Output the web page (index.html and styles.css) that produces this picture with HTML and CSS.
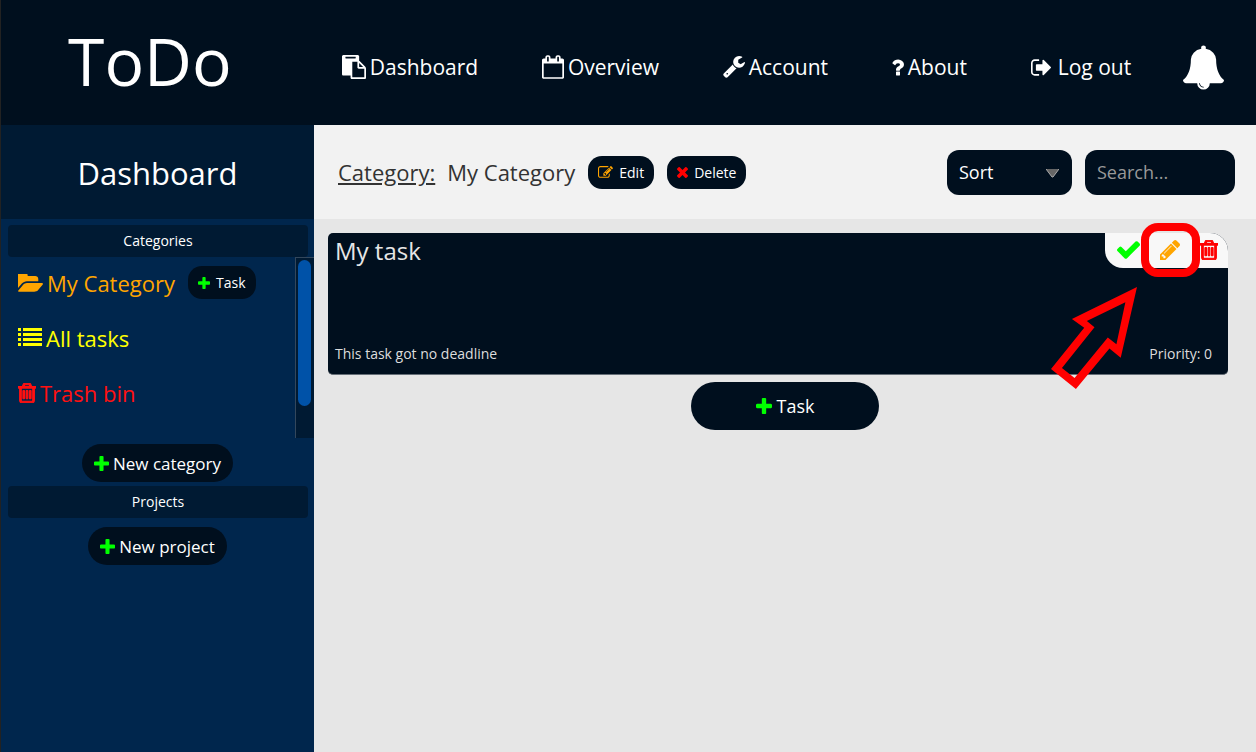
FILE: index.html
```html
<!DOCTYPE html>
<html lang="en">
<head>
<meta charset="utf-8">
<meta name="viewport" content="width=device-width, initial-scale=1">
<title>ToDo - Dashboard</title>
<link rel="stylesheet" href="styles.css">
</head>
<body>
<svg class="sprite" aria-hidden="true">
  <symbol id="plus" viewBox="192 128 1408 1408"><path d="M1600 736v192q0 40-28 68t-68 28h-416v416q0 40-28 68t-68 28h-192q-40 0-68-28t-28-68v-416h-416q-40 0-68-28t-28-68v-192q0-40 28-68t68-28h416v-416q0-40 28-68t68-28h192q40 0 68 28t28 68v416h416q40 0 68 28t28 68z"/></symbol>
  <symbol id="trash" viewBox="192 128 1408 1536"><path d="M704 736v576q0 14-9 23t-23 9h-64q-14 0-23-9t-9-23v-576q0-14 9-23t23-9h64q14 0 23 9t9 23zm256 0v576q0 14-9 23t-23 9h-64q-14 0-23-9t-9-23v-576q0-14 9-23t23-9h64q14 0 23 9t9 23zm256 0v576q0 14-9 23t-23 9h-64q-14 0-23-9t-9-23v-576q0-14 9-23t23-9h64q14 0 23 9t9 23zm128 724v-948h-896v948q0 22 7 40.500t14.500 27 10.500 8.500h832q3 0 10.500-8.500t14.500-27 7-40.500zm-672-1076h448l-48-117q-7-9-17-11h-317q-10 2-17 11zm928 32v64q0 14-9 23t-23 9h-96v948q0 83-47 143.500t-113 60.500h-832q-66 0-113-58.500t-47-141.500v-952h-96q-14 0-23-9t-9-23v-64q0-14 9-23t23-9h309l70-167q15-37 54-63t79-26h320q40 0 79 26t54 63l70 167h309q14 0 23 9t9 23z" stroke="currentColor" stroke-width="85"/></symbol>
</svg>

<header class="header">
  <h1 class="logo">ToDo</h1>
  <nav class="nav">
    <a class="nav-link" href="#dashboard"><svg class="icon i24" viewBox="0 0 1792 1792"><path d="M768 1664h896v-640h-416q-40 0-68-28t-28-68v-416h-384v1152zm256-1440v-64q0-13-9.500-22.500t-22.500-9.500h-704q-13 0-22.500 9.500t-9.500 22.500v64q0 13 9.500 22.500t22.500 9.500h704q13 0 22.500-9.500t9.500-22.500zm256 672h299l-299-299v299zm512 128v672q0 40-28 68t-68 28h-960q-40 0-68-28t-28-68v-160h-544q-40 0-68-28t-28-68v-1344q0-40 28-68t68-28h1088q40 0 68 28t28 68v328q21 13 36 28l408 408q28 28 48 76t20 88z"/></svg>Dashboard</a>
    <a class="nav-link" href="#overview"><svg class="icon calendar" viewBox="64 0 1664 1792"><path d="M192 1664h1408v-1024h-1408v1024zm384-1216v-288q0-14-9-23t-23-9h-64q-14 0-23 9t-9 23v288q0 14 9 23t23 9h64q14 0 23-9t9-23zm768 0v-288q0-14-9-23t-23-9h-64q-14 0-23 9t-9 23v288q0 14 9 23t23 9h64q14 0 23-9t9-23zm384-64v1280q0 52-38 90t-90 38h-1408q-52 0-90-38t-38-90v-1280q0-52 38-90t90-38h128v-96q0-66 47-113t113-47h64q66 0 113 47t47 113v96h384v-96q0-66 47-113t113-47h64q66 0 113 47t47 113v96h128q52 0 90 38t38 90z"/></svg>Overview</a>
    <a class="nav-link" href="#account"><svg class="icon i22" viewBox="64 128 1664 1664"><path d="M448 1472q0-26-19-45t-45-19-45 19-19 45 19 45 45 19 45-19 19-45zm644-420l-682 682q-37 37-90 37-52 0-91-37l-106-108q-38-36-38-90 0-53 38-91l681-681q39 98 114.500 173.500t173.500 114.500zm634-435q0 39-23 106-47 134-164.500 217.500t-258.500 83.500q-185 0-316.500-131.500t-131.500-316.500 131.500-316.500 316.500-131.500q58 0 121.500 16.500t107.500 46.500q16 11 16 28t-16 28l-293 169v224l193 107q5-3 79-48.500t135.500-81 70.500-35.500q15 0 23.500 10t8.500 25z"/></svg>Account</a>
    <a class="nav-link" href="#about"><svg class="icon question" viewBox="448 256 960 1280"><path d="M1088 1256v240q0 16-12 28t-28 12h-240q-16 0-28-12t-12-28v-240q0-16 12-28t28-12h240q16 0 28 12t12 28zm316-600q0 54-15.500 101t-35 76.500-55 59.500-57.500 43.500-61 35.500q-41 23-68.500 65t-27.500 67q0 17-12 32.500t-28 15.500h-240q-15 0-25.500-18.500t-10.500-37.500v-45q0-83 65-156.500t143-108.500q59-27 84-56t25-76q0-42-46.500-74t-107.500-32q-65 0-108 29-35 25-107 115-13 16-31 16-12 0-25-8l-164-125q-13-10-15.500-25t5.500-28q160-266 464-266 80 0 161 31t146 83 106 127.500 41 158.500z"/></svg>About</a>
    <a class="nav-link wide" href="#logout"><svg class="icon logout" viewBox="64 256 1568 1280"><path d="M704 1440q0 4 1 20t.5 26.500-3 23.500-10 19.500-20.500 6.500h-320q-119 0-203.500-84.500t-84.500-203.500v-704q0-119 84.500-203.500t203.500-84.500h320q13 0 22.500 9.500t9.500 22.500q0 4 1 20t.5 26.500-3 23.500-10 19.500-20.500 6.500h-320q-66 0-113 47t-47 113v704q0 66 47 113t113 47h312l11.500 1 11.500 3 8 5.500 7 9 2 13.500zm928-544q0 26-19 45l-544 544q-19 19-45 19t-45-19-19-45v-288h-448q-26 0-45-19t-19-45v-384q0-26 19-45t45-19h448v-288q0-26 19-45t45-19 45 19l544 544q19 19 19 45z"/></svg>Log out</a>
    <button class="bell" type="button" aria-label="Notifications"><svg class="icon" viewBox="64 0 1664 1792"><path d="M912 1696q0-16-16-16-59 0-101.500-42.500t-42.500-101.500q0-16-16-16t-16 16q0 73 51.500 124.500t124.500 51.500q16 0 16-16zm816-288q0 52-38 90t-90 38h-448q0 106-75 181t-181 75-181-75-75-181h-448q-52 0-90-38t-38-90q50-42 91-88t85-119.500 74.500-158.500 50-206 19.500-260q0-152 117-282.500t307-158.500q-8-19-8-39 0-40 28-68t68-28 68 28 28 68q0 20-8 39 190 28 307 158.500t117 282.500q0 139 19.500 260t50 206 74.500 158.500 85 119.500 91 88z"/></svg></button>
  </nav>
</header>

<div class="layout">
  <aside class="sidebar">
    <h2 class="sidebar-title">Dashboard</h2>
    <h3 class="section-title">Categories</h3>
    <div class="category-scroll">
      <ul class="category-list">
        <li class="category"><a class="category-link orange" href="#my-category"><svg class="icon folder" viewBox="0 256 1815 1280"><path d="M1815 952q0 31-31 66l-336 396q-43 51-120.500 86.500t-143.500 35.500h-1088q-34 0-60.500-13t-26.500-43q0-31 31-66l336-396q43-51 120.500-86.500t143.500-35.500h1088q34 0 60.500 13t26.500 43zm-343-344v160h-832q-94 0-197 47.500t-164 119.500l-337 396-5 6q0-4-.5-12.500t-.5-12.500v-960q0-92 66-158t158-66h320q92 0 158 66t66 158v32h544q92 0 158 66t66 158z"/></svg>My Category</a><button class="pill small" type="button"><svg class="icon i12 green"><use href="#plus"/></svg>Task</button></li>
        <li class="category"><a class="category-link yellow" href="#all"><svg class="icon list" viewBox="0 0 24 19"><path d="M0 0h3v3H0zM5 0h19v3H5zM0 5h3v3H0zM5 5h19v3H5zM0 10h3v3H0zM5 10h19v3H5zM0 15h3v3H0zM5 15h19v3H5z"/></svg>All tasks</a></li>
        <li class="category"><a class="category-link red" href="#trash"><svg class="icon bin"><use href="#trash"/></svg>Trash bin</a></li>
      </ul>
      <div class="track"><div class="thumb"></div></div>
    </div>
    <button class="pill medium" type="button"><svg class="icon i15 green"><use href="#plus"/></svg>New category</button>
    <h3 class="section-title">Projects</h3>
    <button class="pill medium project" type="button"><svg class="icon i15 green"><use href="#plus"/></svg>New project</button>
  </aside>

  <main class="main">
    <div class="toolbar">
      <h2 class="heading"><span class="heading-label">Category:</span><span>My Category</span></h2>
      <button class="pill small" type="button"><svg class="icon edit" viewBox="0 128 1792 1536"><path d="M888 1184l116-116-152-152-116 116v56h96v96h56zm440-720q-16-16-33 1l-350 350q-17 17-1 33t33-1l350-350q17-17 1-33zm80 594v190q0 119-84.500 203.500t-203.500 84.500h-832q-119 0-203.500-84.500t-84.500-203.500v-832q0-119 84.500-203.500t203.500-84.500h832q63 0 117 25 15 7 18 23 3 17-9 29l-49 49q-14 14-32 8-23-6-45-6h-832q-66 0-113 47t-47 113v832q0 66 47 113t113 47h832q66 0 113-47t47-113v-126q0-13 9-22l64-64q15-15 35-7t20 29zm-96-738l288 288-672 672h-288v-288zm444 132l-92 92-288-288 92-92q28-28 68-28t68 28l152 152q28 28 28 68t-28 68z"/></svg>Edit</button>
      <button class="pill small" type="button"><svg class="icon times" viewBox="302 366 1188 1188"><path d="M1490 1322q0 40-28 68l-136 136q-28 28-68 28t-68-28l-294-294-294 294q-28 28-68 28t-68-28l-136-136q-28-28-28-68t28-68l294-294-294-294q-28-28-28-68t28-68l136-136q28-28 68-28t68 28l294 294 294-294q28-28 68-28t68 28l136 136q28 28 28 68t-28 68l-294 294 294 294q28 28 28 68z"/></svg>Delete</button>
      <div class="filters">
        <div class="sort">
          <select class="field" aria-label="Sort"><option>Sort</option></select>
          <svg class="sort-arrow" viewBox="0 0 13 9"><path d="M0 0h13L7 8H6z" fill="#666"/><path d="M0 0l6 8h1l6-8" fill="none" stroke="#aaa"/></svg>
        </div>
        <input class="field search" type="search" placeholder="Search..." aria-label="Search">
      </div>
    </div>

    <section class="tasks">
      <article class="task">
        <h3 class="task-title">My task</h3>
        <div class="task-meta"><span>This task got no deadline</span><span>Priority: 0</span></div>
        <div class="task-actions">
          <button class="action green" type="button" aria-label="Complete"><svg class="icon check" viewBox="121 334 1550 1188"><path d="M1671 566q0 40-28 68l-724 724-136 136q-28 28-68 28t-68-28l-136-136-362-362q-28-28-28-68t28-68l136-136q28-28 68-28t68 28l294 295 656-657q28-28 68-28t68 28l136 136q28 28 28 68z"/></svg></button>
          <button class="action orange marked" type="button" aria-label="Edit"><svg class="icon i20" viewBox="128 149 1515 1515"><path d="M491 1536l91-91-235-235-91 91v107h128v128h107zm523-928q0-22-22-22-10 0-17 7l-542 542q-7 7-7 17 0 22 22 22 10 0 17-7l542-542q7-7 7-17zm-54-192l416 416-832 832h-416v-416zm683 96q0 53-37 90l-166 166-416-416 166-165q36-38 90-38 53 0 91 38l235 234q37 39 37 91z"/></svg></button>
          <button class="action red" type="button" aria-label="Delete"><svg class="icon bin"><use href="#trash"/></svg></button>
        </div>
        <svg class="pointer" viewBox="62 216 259 307" aria-hidden="true"><path fill-rule="evenodd" d="M321 216L125 312l37 27L62 463l75 60 101-122 34 28zM286 262l-27 126-26-20-100 122-38-30 98-123-23-19z"/></svg>
      </article>
      <button class="pill large" type="button"><svg class="icon i16 green"><use href="#plus"/></svg>Task</button>
    </section>
  </main>
</div>
</body>
</html>
```
FILE: styles.css
```css
* { box-sizing: border-box; }

body {
  margin: 0;
  min-height: 100vh;
  display: flex;
  flex-direction: column;
  background: #e6e6e6;
  color: #fff;
  font-family: "Open Sans", "Noto Sans", sans-serif;
}

h1, h2, h3, ul { margin: 0; padding: 0; font-weight: 400; }
ul { list-style: none; }
a { color: inherit; text-decoration: none; }
button, select, input { font: inherit; color: inherit; border: 0; }
button { cursor: pointer; }

.sprite { position: absolute; width: 0; height: 0; }
.icon { display: block; flex: none; fill: currentColor; }
.i12 { width: 12px; height: 12px; }
.i15 { width: 15px; height: 15px; }
.i16 { width: 16px; height: 16px; }
.i20 { width: 20px; height: 20px; }
.i22 { width: 22px; height: 22px; }
.i24 { width: 24px; height: 24px; }
.calendar { width: 22px; height: 24px; }
.question { width: 12px; height: 17px; }
.logout { width: 20px; height: 17px; }
.folder { width: 25px; height: 18px; }
.list { width: 24px; height: 19px; }
.bin { width: 18px; height: 20px; }
.edit { width: 15px; height: 13px; color: #ffa500; }
.times { width: 11px; height: 11px; color: #f00; }
.check { width: 23px; height: 18px; }
.green { color: #0f0; }
.orange { color: #ffa500; }
.yellow { color: #ff0; }
.red { color: #f11; }

.header { display: flex; height: 125px; border-left: 1px solid #222; background: #000f1e; }
.logo {
  width: 25%;
  padding-right: 16px;
  text-align: center;
  font-size: 66px;
  line-height: 120px;
}
.nav {
  flex: 1;
  display: flex;
  align-items: center;
  justify-content: space-between;
  padding: 9px 32px 0 27px;
}
.nav-link { display: flex; align-items: center; gap: 4px; font-size: 21px; line-height: 32px; }
.wide { gap: 7px; }
.bell { margin-left: -12px; padding: 0; background: none; }
.bell .icon { width: 41px; height: 45px; }

.layout { flex: 1; display: flex; }
.sidebar {
  width: 25%;
  display: flex;
  flex-direction: column;
  align-items: center;
  border-left: 1px solid #222;
  background: #00264d;
}
.sidebar-title {
  align-self: stretch;
  margin-bottom: 6px;
  padding-top: 2px;
  background: #001a33;
  font-size: 31px;
  line-height: 92px;
  text-align: center;
}
.section-title {
  align-self: stretch;
  margin: 0 6px 0 7px;
  border-radius: 4px;
  background: #001a33;
  font-size: 14px;
  line-height: 32px;
  text-align: center;
}
.category-scroll { align-self: stretch; display: flex; margin-bottom: 6px; }
.category-list { flex: 1; padding-left: 17px; }
.category { display: flex; align-items: center; gap: 13px; height: 55px; padding-bottom: 4px; }
.category-link { display: flex; align-items: center; gap: 4px; font-size: 22px; }
.track {
  width: 19px;
  height: 181px;
  padding: 2px 3px 0 2px;
  border: solid #33475c;
  border-width: 1px 0 0 1px;
  background: #001a33;
}
.thumb { height: 146px; border-radius: 7px; background: #0052a8; }

.pill {
  display: flex;
  align-items: center;
  justify-content: center;
  background: #000f1e;
  color: #fff;
}
.small { gap: 6px; height: 33px; padding: 0 10px; border-radius: 14px; font-size: 14px; }
.medium { gap: 4px; height: 38px; padding: 0 12px; border-radius: 19px; font-size: 17px; margin-bottom: 4px; }
.project { margin-top: 9px; }
.large { gap: 5px; width: 188px; height: 48px; border-radius: 24px; font-size: 18px; }

.main { flex: 1; display: flex; flex-direction: column; }
.toolbar {
  display: flex;
  align-items: center;
  gap: 13px;
  height: 94px;
  padding: 0 21px 0 24px;
  background: #f2f2f2;
}
.heading { display: flex; gap: 12px; color: #333; font-size: 22px; line-height: 30px; }
.heading-label { text-decoration: underline; }
.filters { display: flex; gap: 13px; margin-left: auto; }
.sort { position: relative; }
.field {
  appearance: none;
  width: 125px;
  height: 45px;
  padding: 0 12px;
  border-radius: 12px;
  background: #000f1e;
  font-size: 18px;
}
.search { width: 150px; }
.search::placeholder { color: #999; opacity: 1; }
.sort-arrow { position: absolute; right: 13px; top: 19px; width: 13px; height: 9px; pointer-events: none; }

.tasks { display: flex; flex-direction: column; align-items: center; gap: 7px; padding: 14px; }
.task {
  position: relative;
  align-self: stretch;
  display: flex;
  flex-direction: column;
  justify-content: space-between;
  height: 142px;
  margin-right: 14px;
  padding: 0 16px 8px 7px;
  border: 1px solid #666f78;
  border-width: 0 0 1px;
  border-radius: 5px;
  border-top-right-radius: 18px;
  background: #000f1e;
}
.task-title { font-size: 24px; line-height: 36px; color: #e6e6e6; }
.task-meta { display: flex; justify-content: space-between; font-size: 14px; line-height: 24px; color: #ddd; }
.task-actions {
  position: absolute;
  top: 0;
  right: 0;
  display: flex;
  align-items: center;
  gap: 20px;
  height: 35px;
  padding: 0 10px 2px 12px;
  border-radius: 0 18px 0 18px;
  background: #f8f8f8;
}
.action { position: relative; padding: 0; background: none; }
.marked::after {
  content: "";
  position: absolute;
  inset: -17px -20px -17px -19px;
  border: 8px solid #f00;
  border-radius: 17px;
}
.task-actions .red { color: #f00; }
.pointer { position: absolute; top: 54px; right: 91px; width: 86px; height: 102px; fill: #f00; }
```
